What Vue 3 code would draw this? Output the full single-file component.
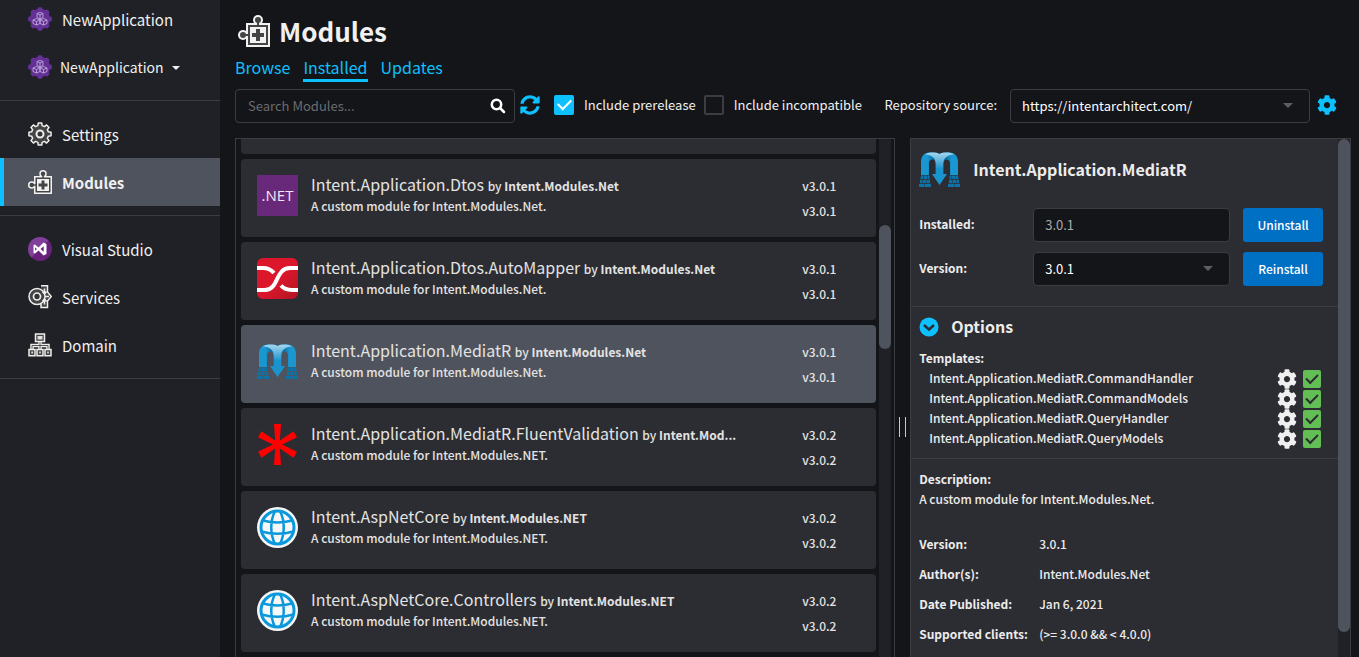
<script setup>
import { ref } from 'vue'

const prerelease = ref(true)
const incompatible = ref(false)
const search = ref('')

const cogPath =
  'M487.4 315.7l-42.6-24.6c4.3-23.2 4.3-47 0-70.2l42.6-24.6c4.9-2.8 7.1-8.6 5.5-14-11.1-35.6-30-67.8-54.7-94.6-3.8-4.1-10-5.1-14.8-2.3L380.8 110c-17.9-15.4-38.5-27.3-60.8-35.1V25.8c0-5.6-3.9-10.5-9.4-11.7-36.7-8.2-74.3-7.8-109.2 0-5.5 1.2-9.4 6.1-9.4 11.7V75c-22.2 7.9-42.8 19.8-60.8 35.1L88.7 85.5c-4.9-2.8-11-1.9-14.8 2.3-24.7 26.7-43.6 58.9-54.7 94.6-1.7 5.4.6 11.2 5.5 14L67.3 221c-4.3 23.2-4.3 47 0 70.2l-42.6 24.6c-4.9 2.8-7.1 8.6-5.5 14 11.1 35.6 30 67.8 54.7 94.6 3.8 4.1 10 5.1 14.8 2.3l42.6-24.6c17.9 15.4 38.5 27.3 60.8 35.1v49.2c0 5.6 3.9 10.5 9.4 11.7 36.7 8.2 74.3 7.8 109.2 0 5.5-1.2 9.4-6.1 9.4-11.7v-49.2c22.2-7.9 42.8-19.8 60.8-35.1l42.6 24.6c4.9 2.8 11 1.9 14.8-2.3 24.7-26.7 43.6-58.9 54.7-94.6 1.5-5.5-.7-11.3-5.6-14.1zM256 336c-44.1 0-80-35.9-80-80s35.9-80 80-80 80 35.9 80 80-35.9 80-80 80z'

// Outline of a toothed wheel centred in a 24 unit box.
function wheel(teeth, outer, inner) {
  const step = (Math.PI * 2) / teeth
  const points = []
  for (let i = 0; i < teeth; i++) {
    const mid = i * step - Math.PI / 2
    for (const [radius, turn] of [[inner, -0.32], [outer, -0.2], [outer, 0.2], [inner, 0.32]]) {
      const angle = mid + turn * step
      points.push(`${(12 + radius * Math.cos(angle)).toFixed(2)} ${(12 + radius * Math.sin(angle)).toFixed(2)}`)
    }
  }
  return `M${points.join('L')}Z`
}
const settingsWheel = wheel(8, 11.2, 8.6)
const appWheel = wheel(8, 12, 10.2)

const apps = [
  { name: 'NewApplication', menu: false },
  { name: 'NewApplication', menu: true },
]
const modules = [
  { icon: 'net', name: 'Intent.Application.Dtos', by: 'Intent.Modules.Net', about: 'A custom module for Intent.Modules.Net.', version: 'v3.0.1' },
  { icon: 'mapper', name: 'Intent.Application.Dtos.AutoMapper', by: 'Intent.Modules.Net', about: 'A custom module for Intent.Modules.Net.', version: 'v3.0.1' },
  { icon: 'mediatr', name: 'Intent.Application.MediatR', by: 'Intent.Modules.Net', about: 'A custom module for Intent.Modules.Net.', version: 'v3.0.1', selected: true },
  { icon: 'star', name: 'Intent.Application.MediatR.FluentValidation', by: 'Intent.Mod...', about: 'A custom module for Intent.Modules.NET.', version: 'v3.0.2' },
  { icon: 'globe', name: 'Intent.AspNetCore', by: 'Intent.Modules.NET', about: 'A custom module for Intent.Modules.NET.', version: 'v3.0.2' },
  { icon: 'globe', name: 'Intent.AspNetCore.Controllers', by: 'Intent.Modules.NET', about: 'A custom module for Intent.Modules.NET.', version: 'v3.0.2' },
]
const templates = ref(['CommandHandler', 'CommandModels', 'QueryHandler', 'QueryModels'].map(
  (name) => ({ name: `Intent.Application.MediatR.${name}`, on: true }),
))
const facts = [
  ['Version:', '3.0.1'],
  ['Author(s):', 'Intent.Modules.Net'],
  ['Date Published:', 'Jan 6, 2021'],
  ['Supported clients:', '(>= 3.0.0 && < 4.0.0)'],
]
</script>

<template>
  <div class="app">
    <svg class="defs" aria-hidden="true">
      <defs>
        <linearGradient id="arch" x1="0" y1="0" x2="0" y2="1">
          <stop offset="0" stop-color="#a5d6ee" />
          <stop offset=".5" stop-color="#1a94cf" />
          <stop offset="1" stop-color="#1a94cf" />
        </linearGradient>
        <linearGradient id="side" x1="0" y1="0" x2="1" y2="0">
          <stop offset="0" stop-color="#1a96d1" />
          <stop offset=".35" stop-color="#1a96d1" />
          <stop offset=".8" stop-color="#0a5f94" />
        </linearGradient>
        <linearGradient id="crimson" x1="0" y1="0" x2="1" y2="1">
          <stop offset=".5" stop-color="#dc172b" />
          <stop offset="1" stop-color="#b01524" />
        </linearGradient>
        <symbol id="puzzle" viewBox="0 0 32 32">
          <g fill="#f2f2f2">
            <circle cx="20" cy="5" r="5" />
            <circle cx="5" cy="20" r="5" />
            <rect x="8" y="8" width="24" height="24" />
          </g>
          <g fill="#444">
            <circle cx="20" cy="5" r="3" />
            <circle cx="5" cy="20" r="3" />
            <rect x="19" y="6" width="2" height="5" />
            <rect x="6" y="19" width="5" height="2" />
          </g>
          <rect x="11" y="11" width="18" height="18" fill="#f2f2f2" stroke="#444" stroke-width="2" />
          <path d="M20 14V26M14 20H26" stroke="#444" stroke-width="4" />
        </symbol>
        <symbol id="mediatr" viewBox="0 0 41 41">
          <path id="leg" d="M2 26V13C2 5 8 3 13 3.300C16 3.300 19 4 20.500 5V26H16.700V15C16.700 12 15 10.500 13.500 10.500C11.500 10.500 10 12 10 14V26Z" fill="url(#side)" />
          <use href="#leg" transform="matrix(-1 0 0 1 41 0)" />
          <path d="M6 5.500C10 3 17 3 20.500 5C24 3 31 3 35 5.500C28 6 24.300 9 24.300 15V25H28L20.500 36L13 25H16.700V15C16.700 9 13 6 6 5.500Z" fill="url(#arch)" />
          <g id="bricks" fill="#0c73a8">
            <path d="M2 26.500H4.500V30H1.500ZM5 26.500H8V30H5ZM8.500 26.500H10.500V30H8.500ZM1 30.700H3.500V34H1ZM4 30.700H7.500V34H4ZM8 30.700H11V34H8ZM0 34.700H5V38H0ZM5.500 34.700H12V38H5.500Z" />
          </g>
          <use href="#bricks" transform="matrix(-1 0 0 1 41 0)" />
        </symbol>
      </defs>
    </svg>

    <aside class="sidebar">
      <nav class="group brand">
        <a v-for="(app, i) in apps" :key="i" href="#" class="nav" :class="{ menu: app.menu }">
          <svg viewBox="0 0 24 24" class="nav-icon">
            <path :d="appWheel" fill="#633096" />
            <g fill="none" stroke="#c9b3e0" stroke-width=".8">
              <path d="M12 5.500L15 6.500V10.500L12 12L9 10.500V6.500ZM9 6.500L12 8L15 6.500M12 8V12" />
              <path d="M8.500 11.500L12 13V16.500L8.500 18L5 16.500V13ZM5 13L8.500 14.500L12 13M8.500 14.500V18" />
              <path d="M15.500 11.500L19 13V16.500L15.500 18L12 16.500V13ZM12 13L15.500 14.500L19 13M15.500 14.500V18" />
            </g>
          </svg>
          <span>{{ app.name }}</span>
          <i v-if="app.menu" class="caret"></i>
        </a>
      </nav>
      <nav class="group">
        <a href="#" class="nav">
          <svg viewBox="0 0 24 24" class="nav-icon">
            <path :d="settingsWheel" fill="#444" stroke="#eee" stroke-width="1.500" stroke-linejoin="round" />
            <circle cx="12" cy="12" r="3.500" fill="#333" stroke="#eee" stroke-width="2" />
          </svg>
          <span>Settings</span>
        </a>
        <a href="#" class="nav active" aria-current="page">
          <svg class="nav-icon"><use href="#puzzle" /></svg>
          <span>Modules</span>
        </a>
      </nav>
      <nav class="group">
        <a href="#" class="nav">
          <svg viewBox="0 0 24 24" class="nav-icon">
            <circle cx="12" cy="12" r="12" fill="#68217a" />
            <path d="M3.500 20.500A12 12 0 0 1 20.500 3.500Z" fill="#80409a" />
            <path fill="#fff" fill-rule="evenodd" d="M5.500 8L7 7.500L10.500 10.500L15.500 5.500L18.500 7V17L15.500 18.500L10.500 13.500L7 16.500L5.500 16ZM7 10.200V13.800L9 12ZM12.500 12L15.700 14.700V9.300Z" />
          </svg>
          <span>Visual Studio</span>
        </a>
        <a href="#" class="nav">
          <svg viewBox="0 0 24 24" class="nav-icon">
            <path d="M13 .7H19.500V7L23.300 11.500L19.500 16V22.500H13V19" fill="#444" stroke="#eee" stroke-width="1.500" />
            <circle cx="9" cy="11.500" r="8" fill="#444" stroke="#eee" stroke-width="1.500" />
            <circle cx="9" cy="11.500" r="3.500" fill="#333" stroke="#eee" stroke-width="1.700" />
            <path d="M16.500 3.500V8M14.500 6.500L16.500 9L18.500 6.500M16.500 19.500V15M14.500 16.500L16.500 14L18.500 16.500M17 11.500H21" fill="none" stroke="#eee" stroke-width="1.500" />
          </svg>
          <span>Services</span>
        </a>
        <a href="#" class="nav">
          <svg viewBox="0 0 24 24" class="nav-icon">
            <path d="M12 9V17M4 17V12.500H20V17" fill="none" stroke="#eee" stroke-width="3.500" />
            <path d="M12 9V17M4 17V12.500H20V17" fill="none" stroke="#555" stroke-width="1" />
            <g fill="#444" stroke="#eee" stroke-width="1.500">
              <path d="M7.500 1H16.500V8.500H7.500ZM1 16.500H7V22.800H1ZM9 16.500H15V22.800H9ZM17 16.500H23V22.800H17Z" />
            </g>
            <path d="M9.500 3H14.500V6.500H9.500ZM3.300 18.500H5V20.500H3.300ZM11.200 18.500H12.800V20.500H11.200ZM19.200 18.500H20.800V20.500H19.200Z" fill="#ddd" />
          </svg>
          <span>Domain</span>
        </a>
      </nav>
    </aside>

    <main class="main">
      <header class="heading">
        <svg class="heading-icon"><use href="#puzzle" /></svg>
        <h1>Modules</h1>
      </header>
      <nav class="tabs">
        <a href="#">Browse</a>
        <a href="#" class="current" aria-current="page">Installed</a>
        <a href="#">Updates</a>
      </nav>

      <div class="toolbar">
        <div class="search">
          <input v-model="search" type="text" class="search-input" placeholder="Search Modules..." aria-label="Search Modules" />
          <button class="bare" aria-label="Search">
            <svg viewBox="0 0 16 16" class="glass"><circle cx="6.500" cy="6.500" r="4.700" /><path d="M10 10L14 14" /></svg>
          </button>
        </div>
        <button class="bare" aria-label="Refresh">
          <svg viewBox="0 0 512 512" class="blue-icon">
            <path d="M370.720 133.280C339.458 104.008 298.888 87.962 255.848 88c-77.458.068-144.328 53.178-162.791 126.850-1.344 5.363-6.122 9.150-11.651 9.150H24.103c-7.498 0-13.194-6.807-11.807-14.176C33.933 94.924 134.813 8 256 8c66.448 0 126.791 26.136 171.315 68.685L463.030 40.970C478.149 25.851 504 36.559 504 57.941V192c0 13.255-10.745 24-24 24H345.941c-21.382 0-32.090-25.851-16.971-40.971l41.750-41.749zM32 296h134.059c21.382 0 32.090 25.851 16.971 40.971l-41.750 41.750c31.262 29.273 71.835 45.319 114.876 45.280 77.418-.070 144.315-53.144 162.787-126.849 1.344-5.363 6.122-9.150 11.651-9.150h57.304c7.498 0 13.194 6.807 11.807 14.176C478.067 417.076 377.187 504 256 504c-66.448 0-126.791-26.136-171.315-68.685L48.970 471.030C33.851 486.149 8 475.441 8 454.059V320c0-13.255 10.745-24 24-24z" />
          </svg>
        </button>
        <label class="check"><input v-model="prerelease" type="checkbox" class="tick" />Include prerelease</label>
        <label class="check"><input v-model="incompatible" type="checkbox" class="tick" />Include incompatible</label>
        <label class="source" for="source">Repository source:</label>
        <div class="picker repo">
          <select id="source" class="field"><option>https://intentarchitect.com/</option></select>
          <i class="arrow"></i>
        </div>
        <button class="bare" aria-label="Repository settings">
          <svg viewBox="0 0 512 512" class="blue-icon"><path :d="cogPath" /></svg>
        </button>
      </div>

      <div class="panes">
        <section class="list">
          <div class="cards">
            <div class="card cut"></div>
            <article v-for="m in modules" :key="m.name" class="card" :class="{ selected: m.selected }">
              <svg viewBox="0 0 41 41" class="logo">
                <template v-if="m.icon === 'net'">
                  <rect width="41" height="41" fill="#68297b" />
                  <text x="20.500" y="26" text-anchor="middle" class="net">.NET</text>
                </template>
                <template v-else-if="m.icon === 'mapper'">
                  <rect width="41" height="41" rx="6" fill="url(#crimson)" />
                  <g fill="none" stroke="#fff" stroke-width="4">
                    <path d="M0 10H6C11 10 14 11.500 17 15M24 27.500C27 31 30 32 35 32H41" />
                    <path d="M0 32H8C22 32 18 10 33 10H41" />
                  </g>
                </template>
                <use v-else-if="m.icon === 'mediatr'" href="#mediatr" />
                <g v-else-if="m.icon === 'star'" fill="red">
                  <path v-for="turn in [0, 60, 120, 180, 240, 300]" :key="turn" :transform="`rotate(${turn} 20.500 20.500)`" d="M17 0H24L22.500 21H18.500Z" />
                </g>
                <g v-else fill="none" stroke="#0998dc">
                  <circle cx="20.500" cy="20.500" r="20.500" fill="#f7f7f7" stroke="none" />
                  <circle cx="20.500" cy="20.500" r="16.500" stroke-width="3" />
                  <path d="M18 4C13 14 13 27 18 37M23 4C28 14 28 27 23 37M6 13.500Q20.500 17.500 35 13.500M4.500 24.500Q20.500 29 36.500 24.500" stroke-width="2.500" />
                </g>
              </svg>
              <div class="info">
                <h2>{{ m.name }} <small>by <b>{{ m.by }}</b></small></h2>
                <p>{{ m.about }}</p>
              </div>
              <div class="versions"><span>{{ m.version }}</span><span>{{ m.version }}</span></div>
            </article>
          </div>
          <div class="track list-track"><i class="thumb"></i></div>
        </section>

        <div class="splitter"><i></i></div>

        <section class="detail">
          <div class="detail-body">
            <div class="block intro">
              <div class="detail-title">
                <svg class="logo"><use href="#mediatr" /></svg>
                <h2>Intent.Application.MediatR</h2>
              </div>
              <div class="form-row">
                <label for="installed">Installed:</label>
                <input id="installed" type="text" class="field readonly" value="3.0.1" readonly />
                <button class="action">Uninstall</button>
              </div>
              <div class="form-row">
                <label for="version">Version:</label>
                <div class="picker">
                  <select id="version" class="field"><option>3.0.1</option></select>
                  <i class="arrow"></i>
                </div>
                <button class="action">Reinstall</button>
              </div>
            </div>

            <div class="block options">
              <div class="options-head">
                <button class="bare" aria-label="Collapse options">
                  <svg viewBox="0 0 20 20" class="blue-icon"><circle cx="10" cy="10" r="9.500" /><path class="chevron" d="M5 8L10 12.500L15 8" /></svg>
                </button>
                <h3>Options</h3>
              </div>
              <strong class="line">Templates:</strong>
              <div v-for="t in templates" :key="t.name" class="template">
                <label :for="t.name">{{ t.name }}</label>
                <button class="bare" :aria-label="`Configure ${t.name}`">
                  <svg viewBox="0 0 512 512" class="white-icon"><path :d="cogPath" /></svg>
                </button>
                <input :id="t.name" v-model="t.on" type="checkbox" class="tick green" />
              </div>
            </div>

            <div class="block about">
              <strong class="line">Description:</strong>
              <p class="line">A custom module for Intent.Modules.Net.</p>
              <dl class="facts">
                <template v-for="[term, value] in facts" :key="term">
                  <dt>{{ term }}</dt>
                  <dd>{{ value }}</dd>
                </template>
              </dl>
            </div>
          </div>
          <div class="track detail-track"><i class="thumb"></i></div>
        </section>
      </div>
    </main>
  </div>
</template>

<style>
body {
  background: #141519;
}
</style>

<style scoped>
* {
  box-sizing: border-box;
}
.app {
  display: flex;
  height: 100vh;
  overflow: hidden;
  background: #141519;
  color: #f0f0f0;
  font-family: "Noto Sans CJK SC", "Noto Sans", sans-serif;
  font-size: 13px;
  line-height: 20px;
}
.app input,
.app select,
.app button {
  font-family: inherit;
  font-size: 13px;
}
.app svg {
  display: block;
  flex: none;
}
.app .defs {
  position: absolute;
  width: 0;
  height: 0;
}
h1, h2, h3, p, dl, dd {
  margin: 0;
}
a {
  text-decoration: none;
}
.bare {
  display: block;
  padding: 0;
  border: 0;
  background: none;
}

/* sidebar */
.sidebar {
  flex: none;
  width: 220px;
  background: #202126;
}
.group {
  padding: 9px 0;
  border-bottom: 1px solid #3c3d43;
}
.brand {
  padding-top: 0;
  margin-top: -5px;
}
.nav {
  display: flex;
  align-items: center;
  gap: 10px;
  height: 48px;
  padding-left: 28px;
  color: #f0f0f0;
  font-size: 15px;
}
.nav span {
  padding-top: 2px;
}
.menu {
  gap: 8px;
  font-size: 14px;
}
.menu span {
  padding-top: 0;
}
.active {
  padding-left: 24px;
  border-left: 4px solid #0dc0ff;
  background: #4f535d;
  font-weight: 700;
}
.nav-icon {
  width: 24px;
  height: 24px;
}
.caret {
  margin-top: 2px;
  border: 4px solid transparent;
  border-top-color: #f0f0f0;
  border-bottom: 0;
}

/* heading and tabs */
.main {
  display: flex;
  flex: 1;
  flex-direction: column;
  min-width: 0;
  padding: 15px 8px 0 15px;
}
.heading {
  display: flex;
  align-items: center;
  gap: 9px;
  height: 32px;
  padding-left: 3px;
}
.heading-icon {
  width: 32px;
  height: 32px;
}
h1 {
  font-size: 26px;
  line-height: 32px;
}
.tabs {
  display: flex;
  gap: 13px;
  margin-top: 9px;
  font-size: 16px;
  line-height: 22px;
}
.tabs a {
  padding-bottom: 4px;
  color: #0dc0ff;
}
.tabs .current {
  padding-bottom: 1px;
  border-bottom: 3px solid #0dc0ff;
}

/* toolbar */
.toolbar {
  display: flex;
  align-items: center;
  height: 34px;
  margin: 7px 0 15px;
}
.search {
  display: flex;
  align-items: center;
  width: 280px;
  height: 34px;
  margin-right: 5px;
  padding: 0 8px 0 12px;
  border: 1px solid #3c3d43;
  border-radius: 4px;
}
.search-input {
  flex: 1;
  min-width: 0;
  padding: 0 0 2px;
  border: 0;
  outline: 0;
  background: none;
  color: #f0f0f0;
}
.search-input::placeholder {
  color: #6b6c70;
}
.glass {
  width: 16px;
  height: 16px;
  fill: none;
  stroke: #fff;
  stroke-width: 2.5;
  stroke-linecap: round;
}
.blue-icon {
  width: 20px;
  height: 20px;
  fill: #0dc0ff;
}
.chevron {
  fill: none;
  stroke: #2c2d32;
  stroke-width: 2.5;
}
.check {
  display: flex;
  align-items: center;
  gap: 10px;
  margin-left: 8px;
}
.toolbar > .bare,
.toolbar > label {
  margin-bottom: 2px;
}
.toolbar .bare + .check {
  margin-left: 14px;
}
.tick {
  display: grid;
  flex: none;
  place-items: center;
  width: 20px;
  height: 20px;
  margin: 0;
  border: 2px solid #3c3d43;
  border-radius: 2px;
  appearance: none;
}
.tick:checked {
  border-color: #0dc0ff;
  background: #0dc0ff;
}
.tick:checked::after {
  width: 11px;
  height: 6px;
  margin-bottom: 4px;
  border: solid #fff;
  border-width: 0 0 2px 2px;
  content: "";
  transform: rotate(-45deg);
}
.source {
  margin: 0 13px 0 auto;
}
.picker {
  display: grid;
  align-items: center;
}
.picker > * {
  grid-area: 1 / 1;
}
.repo {
  width: 300px;
  margin-right: 7px;
}
.toolbar > .bare:last-child {
  margin-right: 14px;
}
.field {
  width: 100%;
  min-width: 0;
  height: 34px;
  padding: 0 12px 2px 11px;
  border: 1px solid #3c3d43;
  border-radius: 4px;
  outline: 0;
  background: #141519;
  color: #fff;
  appearance: none;
}
.readonly {
  color: #a9aaac;
}
.arrow {
  justify-self: end;
  margin: 0 17px 2px 0;
  border: 5px solid transparent;
  border-top-color: #5d5e62;
  border-bottom: 0;
  pointer-events: none;
}

/* panes */
.panes {
  display: grid;
  flex: 1;
  grid-template-columns: minmax(0, 1fr) 15px minmax(0, 39.5%);
  min-height: 0;
  font-size: 12px;
  font-weight: 500;
}
.list,
.detail {
  display: flex;
  min-height: 0;
  border: 1px solid #3c3d43;
  border-bottom: 0;
}
.list {
  gap: 3px;
  padding: 0 3px 0 5px;
}
.cards {
  display: flex;
  flex: 1;
  flex-direction: column;
  gap: 5px;
  min-width: 0;
  overflow: hidden;
}
.card {
  display: flex;
  flex: none;
  gap: 13px;
  height: 78px;
  padding: 16px 16px 0;
  border-radius: 4px;
  background: #2c2d32;
  color: #e3e3e3;
}
.cut {
  height: 15px;
  padding: 0;
  border-radius: 0 0 4px 4px;
}
.selected {
  background: #4f535d;
}
.logo {
  width: 41px;
  height: 41px;
}
.net {
  fill: #f2e8f5;
  font-family: "Open Sans", sans-serif;
  font-size: 15px;
}
.info {
  flex: 1;
  min-width: 0;
}
.info h2 {
  font-size: 16px;
  font-weight: 400;
  line-height: 18px;
  white-space: nowrap;
}
.info p {
  line-height: 22px;
}
.info small {
  font-size: 12px;
  font-weight: 500;
}
.versions {
  display: flex;
  flex-direction: column;
  gap: 5px;
  width: 58px;
  padding-top: 1px;
}
.track {
  display: grid;
  flex: none;
  width: 12px;
  background: #202126;
}
.thumb {
  grid-row: 2;
  border-radius: 6px;
  background: #4f535d;
}
.list-track {
  grid-template-rows: 86fr 124fr 308fr;
}
.detail-track {
  grid-template-rows: 0 493fr 25fr;
}
.splitter {
  display: grid;
  place-items: center;
  padding-top: 58px;
}
.splitter i {
  width: 7px;
  height: 20px;
  border: solid #c9c9c9;
  border-width: 0 1px;
}

/* detail */
.detail {
  background: #2c2d32;
  color: #ececec;
}
.detail-body {
  flex: 1;
  min-width: 0;
  overflow: hidden;
}
.block {
  padding: 10px 15px 10px 8px;
  border-bottom: 1px solid #3c3d43;
}
.intro {
  padding-bottom: 20px;
}
.detail-title {
  display: flex;
  align-items: center;
  gap: 13px;
  margin-bottom: 18px;
}
.detail h2,
.detail h3 {
  padding-bottom: 2px;
  font-size: 16px;
  line-height: 18px;
}
.form-row {
  display: grid;
  grid-template-columns: 101px minmax(0, 1fr) 80px;
  gap: 13px;
  align-items: center;
}
.form-row + .form-row {
  margin-top: 10px;
}
.form-row label {
  padding-bottom: 2px;
}
.form-row label,
strong,
dt {
  font-weight: 700;
}
.app .action {
  height: 34px;
  padding: 0 0 2px;
  border: 0;
  border-radius: 3px;
  background: #0070c4;
  color: #fff;
  font-size: 12px;
  font-weight: 500;
}
.options-head {
  display: flex;
  align-items: center;
  gap: 12px;
  margin-bottom: 11px;
}
.line {
  display: block;
}
.template {
  display: flex;
  align-items: center;
  gap: 6px;
  height: 20px;
  padding-left: 10px;
}
.template label {
  flex: 1;
}
.template .bare,
.template .tick {
  margin-top: 2px;
}
.white-icon {
  width: 20px;
  height: 20px;
  fill: #f0f0f0;
}
.green {
  width: 18px;
  height: 18px;
  margin-right: 2px;
}
.green:checked {
  border-color: #63be55;
  background: #63be55;
}
.green:checked::after {
  width: 10px;
  height: 5px;
  border-color: #2c2d32;
}
.about {
  border-bottom: 0;
}
.facts {
  display: grid;
  grid-template-columns: 120px 1fr;
  row-gap: 10px;
  margin-top: 25px;
  white-space: nowrap;
}
</style>
